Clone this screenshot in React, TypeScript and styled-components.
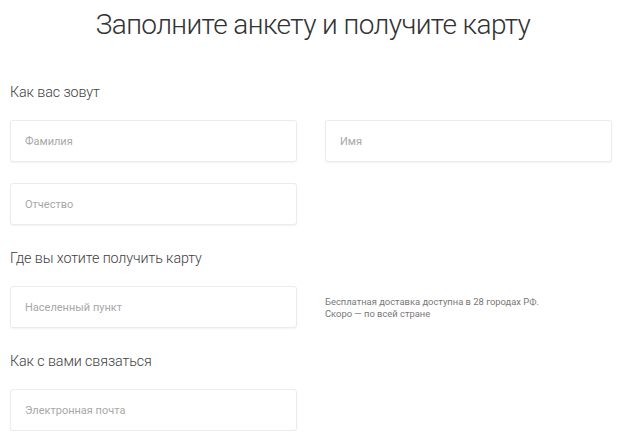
import React from "react";
import styled, { createGlobalStyle } from "styled-components";

const Global = createGlobalStyle`
  html, body { margin: 0; padding: 0; background: #fff; }
  body { font-family: Roboto, "Open Sans", sans-serif; }
  * { box-sizing: border-box; }
`;

const Page = styled.main`
  width: 620px;
  padding: 5px 8px 0 10px;
`;

const Title = styled.h1`
  margin: 0;
  height: 40px;
  font-size: 28px;
  line-height: 40px;
  font-weight: 300;
  letter-spacing: -0.6px;
  color: #333;
  text-align: center;
  padding-left: 4px;
`;

const Section = styled.section<{ $first?: boolean }>`
  margin-top: ${(p) => (p.$first ? "37px" : "23px")};
`;

const Label = styled.h2`
  margin: 0 0 18px;
  height: 20px;
  font-size: 14.3px;
  line-height: 20px;
  font-weight: 300;
  letter-spacing: -0.1px;
  color: #3e3e3e;
`;

const Grid = styled.div`
  display: grid;
  grid-template-columns: 287px 287px;
  column-gap: 28px;
  row-gap: 21px;
`;

const Input = styled.input`
  display: block;
  width: 100%;
  height: 42px;
  padding: 0 14px;
  border: 1px solid #ececec;
  border-radius: 3px;
  box-shadow: 0 1px 2px rgba(0, 0, 0, 0.05);
  font-family: Roboto, "Open Sans", sans-serif;
  font-size: 11px;
  color: #333;
  background: #fff;
  outline: none;
  &::placeholder {
    color: #a8a8a8;
  }
`;

const Note = styled.p`
  margin: 0;
  align-self: center;
  font-size: 9.4px;
  line-height: 12px;
  color: #777;
  padding-top: 2px;
`;

export default function App() {
  return (
    <>
      <Global />
      <Page>
        <Title>Заполните анкету и получите карту</Title>
        <Section $first>
          <Label>Как вас зовут</Label>
          <Grid>
            <Input placeholder="Фамилия" />
            <Input placeholder="Имя" />
            <Input placeholder="Отчество" />
          </Grid>
        </Section>
        <Section>
          <Label>Где вы хотите получить карту</Label>
          <Grid>
            <Input placeholder="Населенный пункт" />
            <Note>
              Бесплатная доставка доступна в 28 городах РФ.
              <br />
              Скоро — по всей стране
            </Note>
          </Grid>
        </Section>
        <Section>
          <Label>Как с вами связаться</Label>
          <Grid>
            <Input placeholder="Электронная почта" />
          </Grid>
        </Section>
      </Page>
    </>
  );
}
